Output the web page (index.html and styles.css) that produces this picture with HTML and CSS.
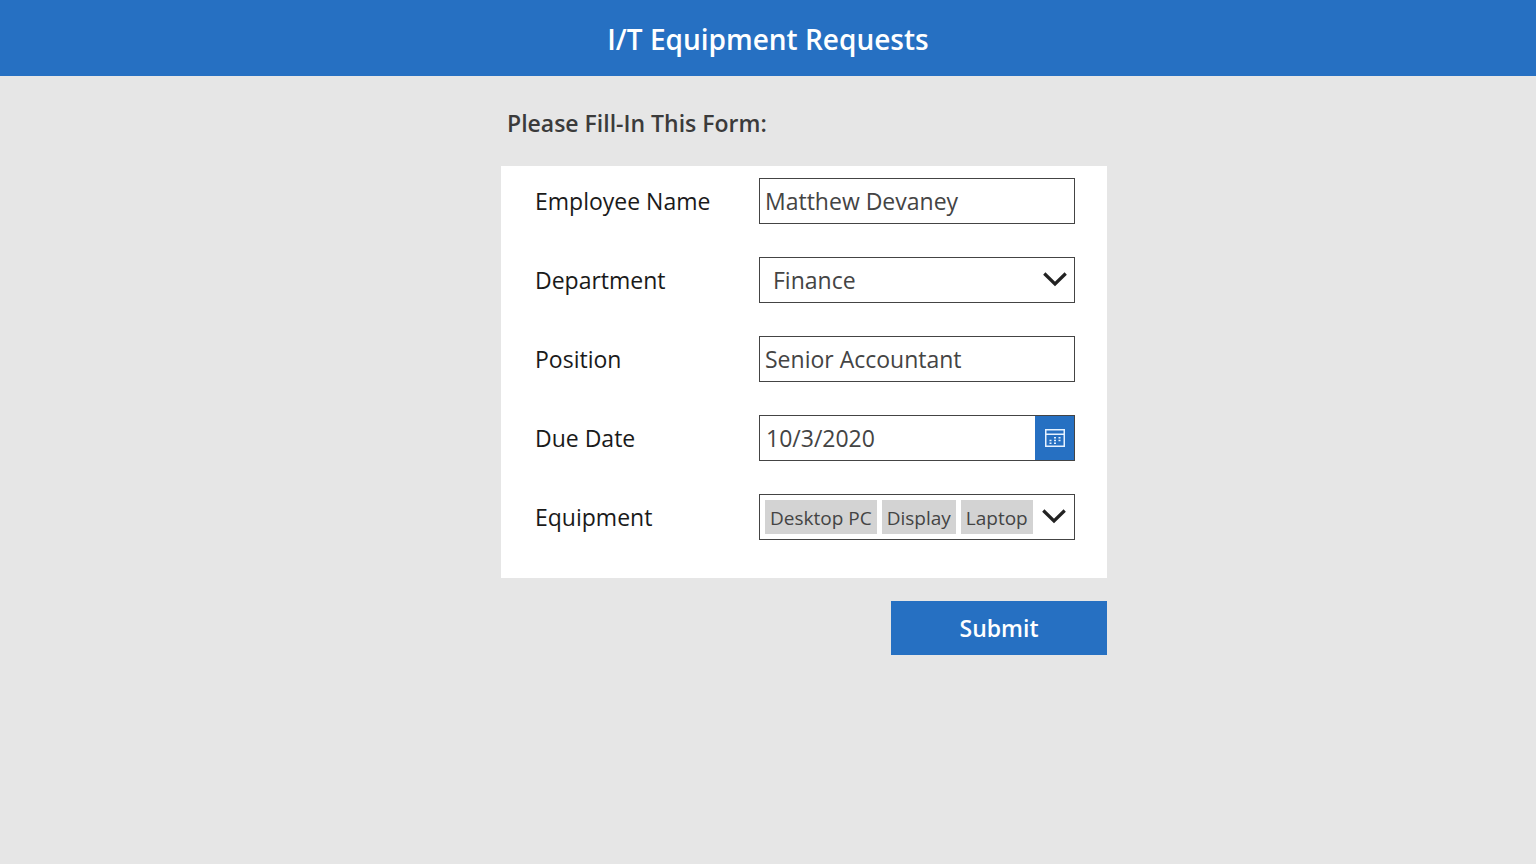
FILE: index.html
```html
<!DOCTYPE html>
<html lang="en">
<head>
  <meta charset="UTF-8" />
  <title>I/T Equipment Requests</title>
  <meta name="viewport" content="width=device-width, initial-scale=1.0"/>
  <link rel="stylesheet" href="styles.css">
</head>
<body>

<header class="top-bar">
  <h1>I/T Equipment Requests</h1>
</header>

<main class="page">
  <form class="request-form">
    <h2>Please Fill-In This Form:</h2>

    <div class="card">
      <div class="row">
        <label for="employee">Employee Name</label>
        <input class="field" type="text" id="employee" value="Matthew Devaney" />
      </div>

      <div class="row">
        <label for="department">Department</label>
        <div class="select-wrap">
          <select class="field" id="department">
            <option>Finance</option>
          </select>
          <svg class="chevron" viewBox="0 0 24 16" aria-hidden="true"><path d="M1.3 1.5 L12 12 L22.7 1.5"/></svg>
        </div>
      </div>

      <div class="row">
        <label for="position">Position</label>
        <input class="field" type="text" id="position" value="Senior Accountant" />
      </div>

      <div class="row">
        <label for="dueDate">Due Date</label>
        <div class="field date-field">
          <input type="text" id="dueDate" value="10/3/2020" />
          <button type="button" class="calendar-btn" aria-label="Open calendar">
            <svg viewBox="0 0 20 18" aria-hidden="true">
              <path d="M.75 .75h18.5v16.5H.75z M.75 5.25h18.5"/>
              <path d="M9 8.75h2M13.5 8.75h2M4.5 11.5h2M9 11.5h2M13.5 11.5h2M4.5 14.25h2M9 14.25h2"/>
            </svg>
          </button>
        </div>
      </div>

      <div class="row">
        <label for="equipment">Equipment</label>
        <button type="button" class="field tag-field" id="equipment" aria-haspopup="listbox">
          <span class="tag">Desktop PC</span>
          <span class="tag">Display</span>
          <span class="tag">Laptop</span>
          <svg class="chevron" viewBox="0 0 24 16" aria-hidden="true"><path d="M1.3 1.5 L12 12 L22.7 1.5"/></svg>
        </button>
      </div>
    </div>

    <button type="submit" class="submit-btn">Submit</button>
  </form>
</main>

</body>
</html>
```
FILE: styles.css
```css
* {
  box-sizing: border-box;
}
body {
  margin: 0;
  min-height: 100vh;
  background-color: #e6e6e6;
  color: #1a1a1a;
  font-family: "Segoe UI", "Open Sans", "Noto Sans", sans-serif;
  font-size: 23px;
}
h1, h2 {
  margin: 0;
  font-weight: 600;
}
input, select, button {
  font: inherit;
  color: inherit;
}
.top-bar {
  padding: 19px 18px 17px;
  background-color: #2670c2;
  color: #fff;
  text-align: center;
}
.top-bar h1 {
  font-size: 28px;
  line-height: 40px;
}
.page {
  display: flex;
  justify-content: center;
  padding: 31px 0 31px 72px;
}
.request-form {
  display: flex;
  flex-direction: column;
  width: 100%;
  max-width: 606px;
}
.request-form h2 {
  padding-left: 6px;
  font-size: 23px;
  line-height: 32px;
  color: #3b3b3b;
}
.card {
  display: grid;
  gap: 33px;
  margin-top: 27px;
  padding: 12px 32px 38px 34px;
  background-color: #fff;
}
.row {
  display: grid;
  grid-template-columns: 224px 1fr;
  align-items: center;
}
.field {
  width: 100%;
  min-width: 0;
  height: 46px;
  padding: 0 5px;
  border: 1px solid #444;
  border-radius: 0;
  background-color: #fff;
  color: #444;
}
.select-wrap {
  display: grid;
  align-items: center;
}
.select-wrap > * {
  grid-area: 1 / 1;
}
select.field {
  appearance: none;
  padding-left: 13px;
}
.chevron {
  width: 24px;
  height: 16px;
  fill: none;
  stroke: #222;
  stroke-width: 3.2;
}
.select-wrap .chevron {
  justify-self: end;
  margin-right: 8px;
  pointer-events: none;
}
.date-field {
  display: flex;
  padding: 0;
}
.date-field input {
  flex: 1;
  min-width: 0;
  padding: 0 6px;
  border: none;
  background: none;
}
.calendar-btn {
  display: grid;
  place-items: center;
  width: 39px;
  padding: 0;
  border: none;
  background-color: #2670c2;
}
.calendar-btn svg {
  width: 20px;
  height: 18px;
  fill: none;
  stroke: #e6f2ff;
  stroke-width: 1.5;
}
.tag-field {
  display: flex;
  align-items: center;
  gap: 5px;
}
.tag {
  padding: 2px 5px 0;
  background-color: #d3d3d3;
  font-size: 19px;
  line-height: 32px;
  white-space: nowrap;
}
.tag-field .chevron {
  flex: none;
  margin: 0 3px 0 auto;
}
.submit-btn {
  align-self: flex-end;
  width: 216px;
  height: 54px;
  margin-top: 23px;
  border: none;
  background-color: #2670c2;
  color: #fff;
  font-weight: 600;
}
```
